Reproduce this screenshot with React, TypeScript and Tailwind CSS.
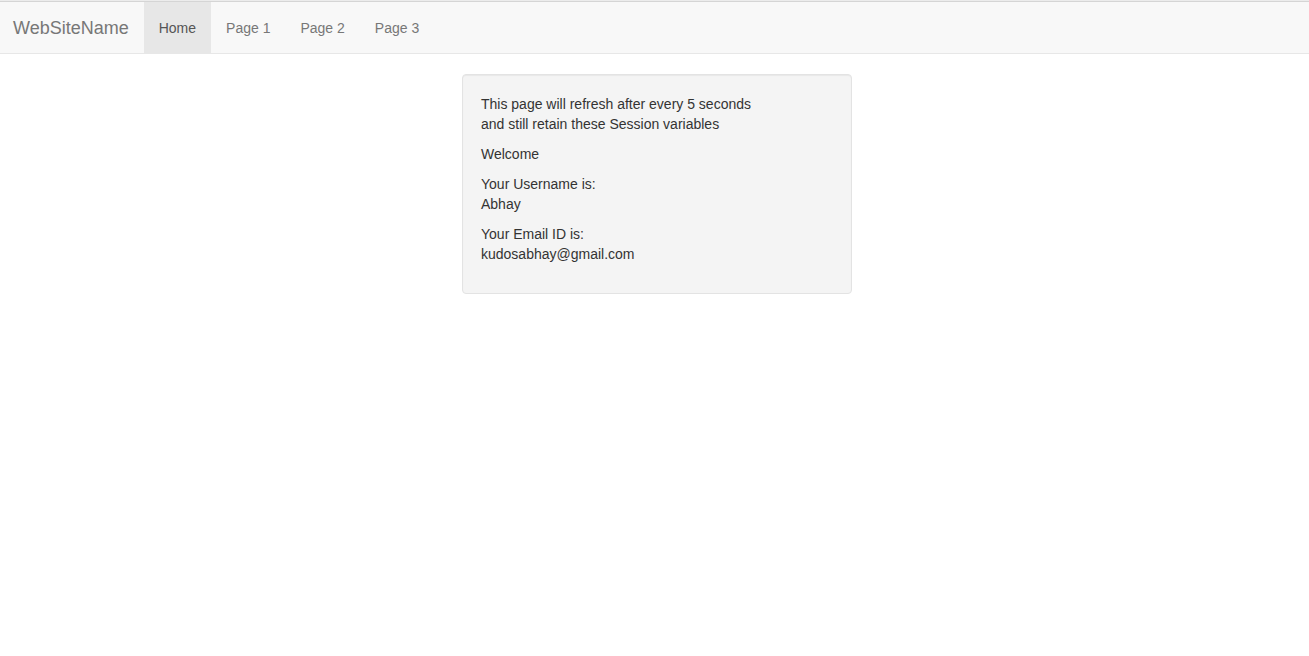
export default function App() {
  return (
    <div className="min-h-screen bg-white text-[14px] leading-[20px] text-[#333]" style={{ fontFamily: '"Liberation Sans", Arial, sans-serif' }}>
      <div className="h-px bg-[#ececec]"></div>
      <nav className="flex h-[53px] border-t border-b border-t-[#d5d5d5] border-b-[#e7e7e7] bg-[#f8f8f8]">
        <a className="flex items-center px-[13px] text-[18px] text-[#777]">WebSiteName</a>
        <ul className="flex pl-[2px]">
          <li className="flex items-center bg-[#e7e7e7] px-[15px] text-[#555]">Home</li>
          <li className="flex items-center px-[15px] text-[#777]">Page 1</li>
          <li className="flex items-center px-[15px] text-[#777]">Page 2</li>
          <li className="flex items-center px-[15px] text-[#777]">Page 3</li>
        </ul>
      </nav>
      <div className="ml-[462px] mt-[20px] w-[390px] rounded-[4px] border border-[#e3e3e3] bg-[#f4f4f4] py-[19px] pl-[18px] pr-[19px] shadow-[inset_0_1px_1px_rgba(0,0,0,0.05)]">
        <p className="mb-[10px]">
          This page will refresh after every 5 seconds
          <br />
          and still retain these Session variables
        </p>
        <p className="mb-[10px]">Welcome</p>
        <p className="mb-[10px]">
          Your Username is:
          <br />
          Abhay
        </p>
        <p className="mb-[10px]">
          Your Email ID is:
          <br />
          kudosabhay@gmail.com
        </p>
      </div>
    </div>
  )
}
